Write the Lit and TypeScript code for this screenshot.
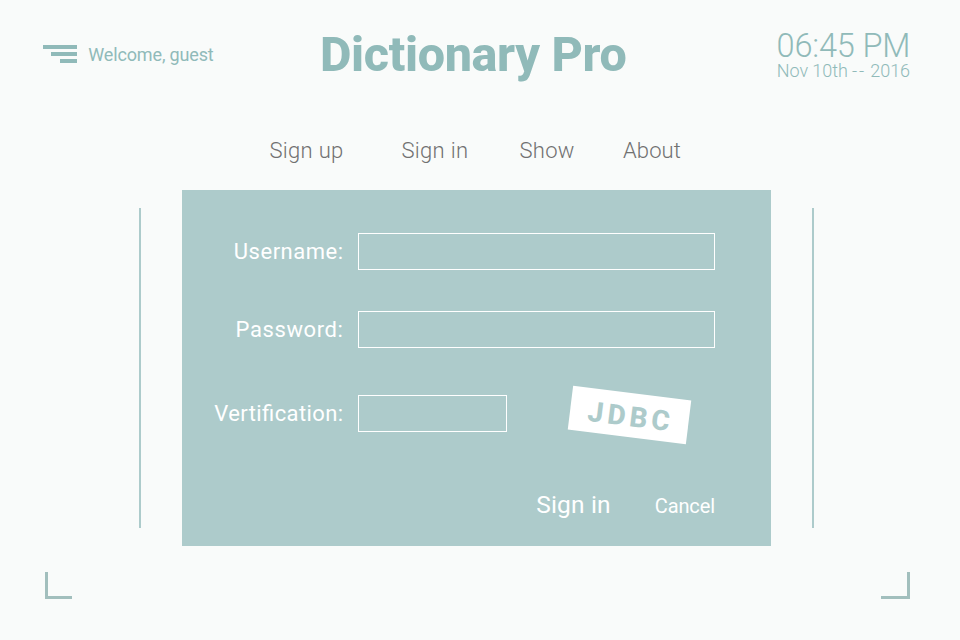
import { LitElement, html, css } from "lit";
import { customElement } from "lit/decorators.js";

@customElement("app-root")
export class AppRoot extends LitElement {
  static styles = css`
    :host { display: block; width: 960px; height: 640px; box-sizing: border-box; background: #f9fbfa; font-family: Roboto, sans-serif; color: #90bab9; overflow: hidden; }
    * { box-sizing: border-box; }
    header { height: 110px; display: grid; grid-template-columns: 277px 1fr 240px; padding: 0 50px 0 43px; white-space: nowrap; }
    .user { display: flex; gap: 11.3px; padding-top: 45px; font-size: 18px; line-height: 20px; letter-spacing: -0.15px; }
    .menu { width: 34px; height: 18px; flex: none; fill: #90bab9; }
    h1 { margin: 0; padding-top: 27px; font-size: 48.5px; line-height: 56px; font-weight: 800; letter-spacing: -0.35px; }
    .clock { display: flex; flex-direction: column; align-items: flex-end; padding-top: 29px; font-weight: 300; }
    .time { font-size: 32.5px; line-height: 34px; height: 33px; letter-spacing: -0.15px; margin-right: -0.3px; }
    .date { font-size: 18px; line-height: 17px; height: 18px; letter-spacing: -0.06px; }
    .dash { letter-spacing: 1.8px; }
    nav { height: 80px; display: flex; padding: 28px 0 0 269.5px; font-size: 22px; line-height: 26px; font-weight: 300; color: #717171; white-space: nowrap; letter-spacing: 0.3px; }
    nav span:nth-child(1) { width: 132px; }
    nav span:nth-child(2) { width: 118px; }
    nav span:nth-child(3) { width: 103.5px; }
    nav span:nth-child(4) { letter-spacing: 0.1px; }
    main { display: flex; justify-content: center; padding-right: 7px; height: 356px; gap: 41px; }
    .rule { width: 2px; height: 320px; margin-top: 18px; background: #adcbcb; }
    form { width: 589px; height: 356px; background: #adcbcb; color: #fff; white-space: nowrap; padding: 43px 56px 0 0; }
    .row { display: flex; height: 37px; margin-bottom: 41px; }
    .row.second { margin-bottom: 47px; }
    label { width: 161.5px; margin-right: 14.5px; text-align: right; font-size: 22px; line-height: 37px; letter-spacing: 0.5px; font-feature-settings: "liga" 1; }
    label.tight { letter-spacing: 0.4px; }
    label.wide { letter-spacing: 0.6px; }
    input { width: 357px; height: 37px; border: 1px solid #fff; background: none; border-radius: 0; padding: 0; outline: none; }
    input.code { width: 149px; }
    .captcha { width: 119px; height: 44px; margin: -2px 0 0 63px; background: #fff; color: #adcbcb; transform: rotate(7.1deg); font-size: 28px; font-weight: 800; line-height: 48px; letter-spacing: 4px; text-align: center; padding-left: 3px; }
    .actions { display: flex; justify-content: flex-end; align-items: baseline; gap: 44px; margin-top: 58px; line-height: 30px; }
    button { all: unset; color: #fff; }
    .submit { font-size: 24.5px; letter-spacing: 0.15px; }
    .cancel { font-size: 20px; letter-spacing: -0.1px; }
    .corners { display: flex; justify-content: space-between; padding: 26px 50px 0 45px; }
    .corner { width: 27px; height: 27px; border: solid #a2bfbd; border-width: 0 0 3px 3px; }
    .corner.right { width: 29px; border-width: 0 3px 3px 0; }
  `;
  render() {
    return html`<header>
        <div class="user">
          <svg class="menu" viewBox="0 0 34 18"><path d="M0 0h34v4H0zM8 7h26v4H8zM17 14h17v4H17z" /></svg>
          <span>Welcome, guest</span>
        </div>
        <h1>Dictionary Pro</h1>
        <div class="clock"><div class="time">06:45 PM</div><div class="date">Nov 10th <span class="dash">--</span> 2016</div></div>
      </header>
      <nav><span>Sign up</span><span>Sign in</span><span>Show</span><span>About</span></nav>
      <main>
        <div class="rule"></div>
        <form>
          <div class="row"><label for="username">Username:</label><input id="username"></div>
          <div class="row second"><label class="wide" for="password">Password:</label><input id="password" type="password"></div>
          <div class="row"><label class="tight" for="code">Vertification:</label><input id="code" class="code"><div class="captcha">JDBC</div></div>
          <div class="actions"><button type="button" class="submit">Sign in</button><button type="button" class="cancel">Cancel</button></div>
        </form>
        <div class="rule"></div>
      </main>
      <div class="corners"><div class="corner"></div><div class="corner right"></div></div>`;
  }
}
